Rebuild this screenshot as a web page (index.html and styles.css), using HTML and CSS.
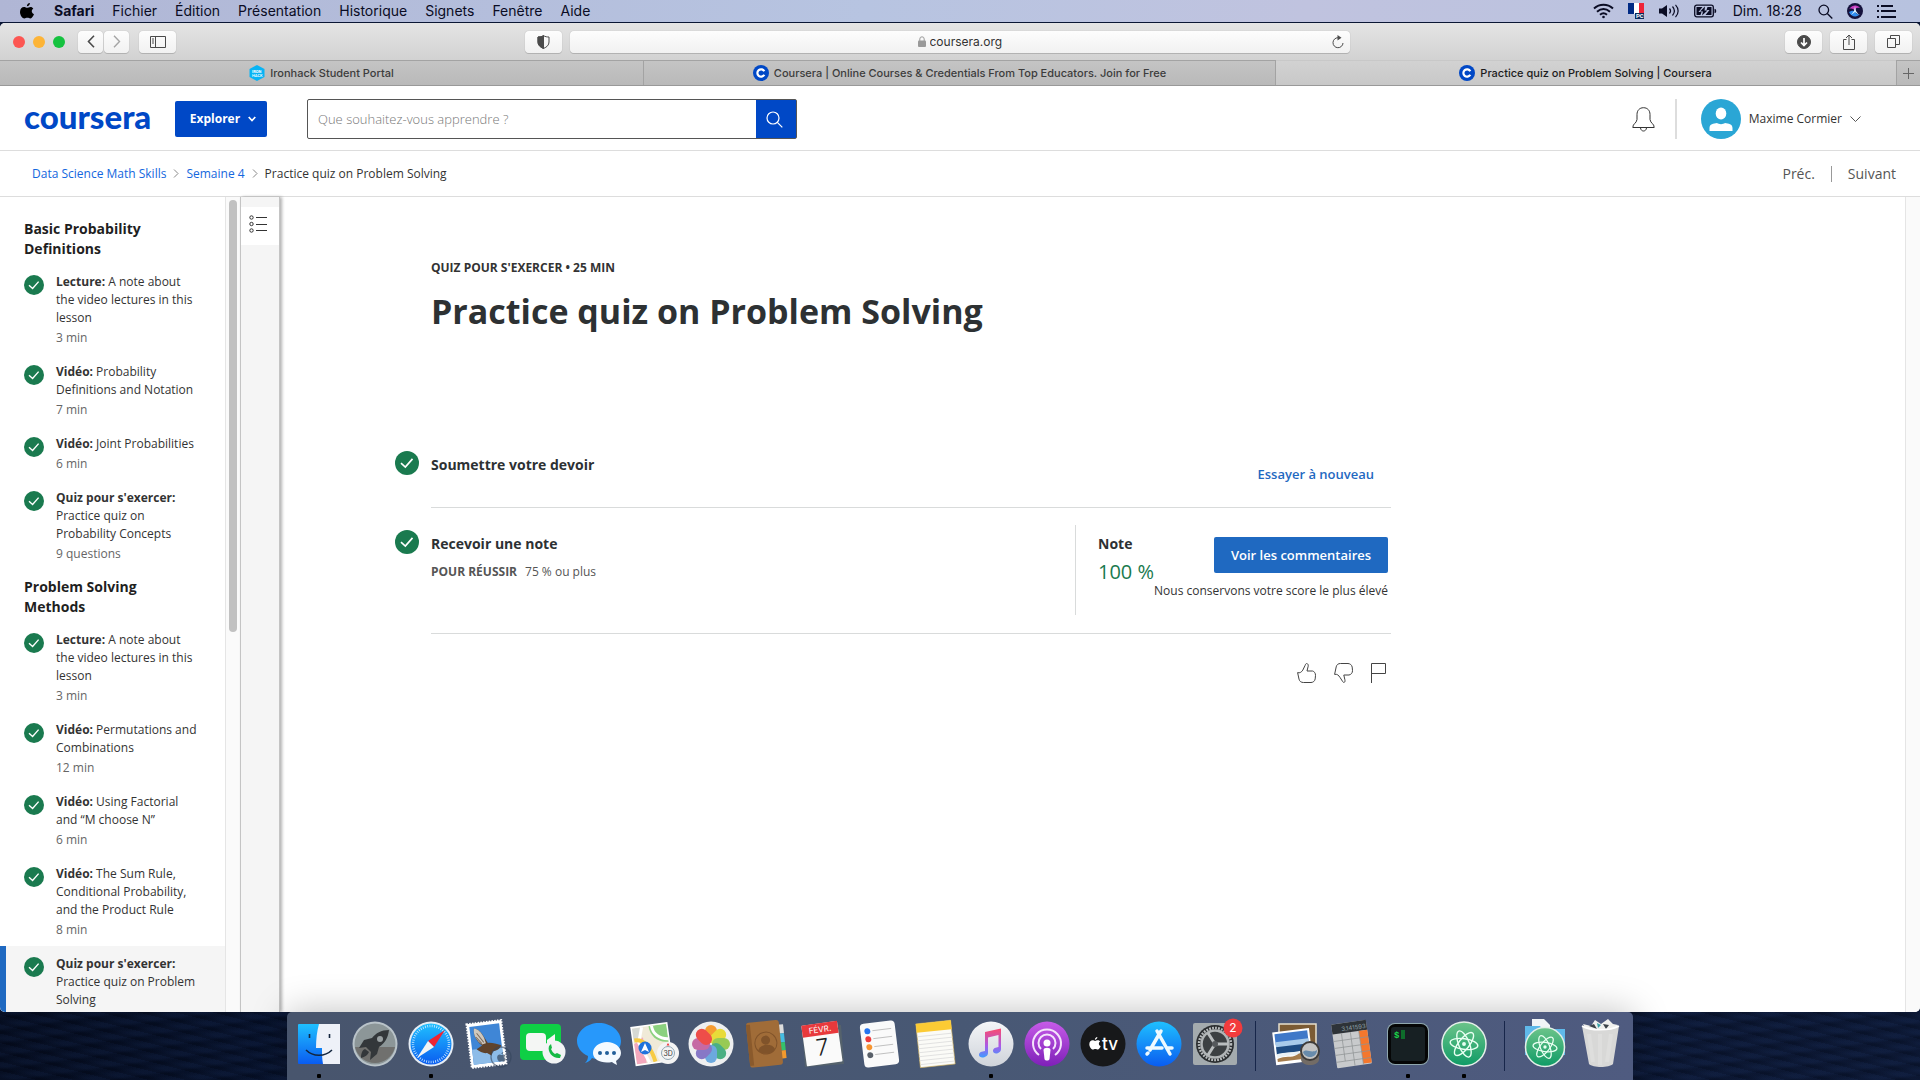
FILE: index.html
```html
<!DOCTYPE html>
<html lang="fr">
<head>
<meta charset="utf-8">
<meta name="viewport" content="width=device-width, initial-scale=1">
<title>Practice quiz on Problem Solving | Coursera</title>
<link rel="stylesheet" href="styles.css">
</head>
<body>
<svg class="defs" aria-hidden="true">
  <symbol id="check" viewBox="0 0 20 20"><circle cx="10" cy="10" r="10" fill="#1a7a4f"/><path d="M5 10.2l3.6 3.2 6-6.8" fill="none" stroke="#fff" stroke-width="1.4"/></symbol>
  <symbol id="fav" viewBox="0 0 16 16"><circle cx="8" cy="8" r="8" fill="#0048c6"/><path d="M11.3 6.2A3.7 3.7 0 1 0 11.3 9.8" fill="none" stroke="#fff" stroke-width="2.2"/></symbol>
  <symbol id="apple" viewBox="0 0 14 16"><path d="M9.9 0c.1 1.600-1.300 3.300-3 3.300C6.700 1.700 8.200.200 9.900 0zM13.300 5.400c-2.300 1.500-1.900 4.700.700 5.700-.6 1.800-2 4.300-3.600 4.300-1.200 0-1.600-.7-3-.7s-1.900.7-3 .7C2.300 15.400 0 11.900 0 8.900 0 5.700 2 4 4 4c1.300 0 2.300.8 3.100.8S9 3.900 10.600 3.900c1 0 2.100.6 2.700 1.500z"/></symbol>
  <symbol id="atom" viewBox="-14 -14 28 28"><g fill="none" stroke="#e9fff2" stroke-width="1.300"><ellipse rx="13" ry="5" transform="rotate(8)"/><ellipse rx="13" ry="5" transform="rotate(68)"/><ellipse rx="13" ry="5" transform="rotate(128)"/></g><circle r="1.800" fill="#e9fff2"/></symbol>
  <linearGradient id="silver" x2="0" y2="1"><stop stop-color="#f4f6f8"/><stop offset="1" stop-color="#cfd3da"/></linearGradient>
  <linearGradient id="green" x2="0" y2="1"><stop stop-color="#6cc48a"/><stop offset="1" stop-color="#0f9b66"/></linearGradient>
  <linearGradient id="blue" x2="0" y2="1"><stop stop-color="#1fc0ff"/><stop offset="1" stop-color="#0a5cf0"/></linearGradient>
</svg>

<header class="menubar">
  <nav class="menus" aria-label="Barre des menus">
    <button aria-label="Pomme"><svg width="16" height="16" viewBox="0 0 16 16"><use href="#apple" width="14" height="16"/></svg></button>
    <button class="app">Safari</button><button>Fichier</button><button>Édition</button><button>Présentation</button><button>Historique</button><button>Signets</button><button>Fenêtre</button><button>Aide</button>
  </nav>
  <div class="status">
    <svg width="21" height="16" viewBox="0 0 21 16" fill="none" stroke="#0a0c24" stroke-width="2"><path d="M1 5.500C6.500.600 14.500.600 20 5.500M4 8.700c4-3.400 9-3.400 13 0M7 11.700c2.200-1.800 4.800-1.800 7 0"/><circle cx="10.500" cy="14" r="1.300" fill="#0a0c24" stroke="none"/></svg>
    <svg width="17" height="16" viewBox="0 0 17 16"><path fill="#002a85" d="M0 0h6v11H0z"/><path fill="#fff" d="M6 0h5v11H6z"/><path fill="#ee2438" d="M11 0h5v11h-5z"/><path fill="#0a2a5c" d="M7 10h9v6H7z"/><text x="8" y="15" font-size="6" font-weight="700" fill="#fff" font-family="Roboto, sans-serif">PC</text></svg>
    <svg width="21" height="14" viewBox="0 0 21 14"><path fill="#0a0c24" d="M0 4.500h3L8 1v12L3 9.500H0z"/><path fill="none" stroke="#0a0c24" stroke-width="1.200" d="M10.500 4.500c1.300 1.500 1.300 3.500 0 5M13.500 2.500c2.300 2.700 2.300 6.300 0 9M16.500.800c3.500 3.700 3.500 8.700 0 12.400"/></svg>
    <svg width="23" height="14" viewBox="0 0 23 14"><rect x=".7" y="1.200" width="18.600" height="11.600" rx="2" fill="none" stroke="#0a0c24" stroke-width="1.300"/><path fill="#0a0c24" d="M2.500 3h6L4.500 8h3l-1 3h-4zM17.500 11h-6l4-5h-3l1-3h4zM11 2.500L6 7.500h3L8 11.500l5.500-5h-3z"/><path fill="#0a0c24" d="M20.500 4.700c2.300.4 2.300 4.200 0 4.600z"/></svg>
    <time>Dim. 18:28</time>
    <svg width="15" height="15" viewBox="0 0 15 15" fill="none" stroke="#0a0c24" stroke-width="1.300"><circle cx="5.800" cy="6" r="4.800"/><path d="M9.300 9.500l5 5"/></svg>
    <svg width="16" height="16" viewBox="0 0 16 16"><circle cx="8" cy="8" r="8" fill="#15123c"/><path d="M2 6c4-5 9-4 11-1-3-1-5 0-5 3-1-2-3-3-6-2z" fill="#c83cc0"/><path d="M2 9c3-2 5-1 6-1 1 3 3 4 5 3-3 4-9 3-11-2z" fill="#2f8cf0"/><path d="M8 3l1 5 3 4-4-3-4 3 3-4z" fill="#dff4ff"/></svg>
    <svg width="19" height="13" viewBox="0 0 19 13" fill="#0a0c24"><path d="M0 0h2v2H0zM0 5h2v2H0zM0 11h2v2H0zM4 0h12v2H4zM4 5h15v2H4zM4 11h15v2H4z"/></svg>
  </div>
</header>

<div class="window">
  <div class="toolbar">
    <div class="tools">
      <span class="lights"><button class="red" aria-label="Fermer"></button><button class="amber" aria-label="Réduire"></button><button class="lime" aria-label="Agrandir"></button></span>
      <span class="pair"><button class="tool" aria-label="Page précédente"><svg width="8" height="13" viewBox="0 0 8 13"><path d="M7 .7L1.500 6.500 7 12.300" stroke-width="1.600"/></svg></button><button class="tool off" aria-label="Page suivante"><svg width="8" height="13" viewBox="0 0 8 13"><path d="M1 .7l5.500 5.800L1 12.300" stroke-width="1.400"/></svg></button></span>
      <button class="tool wide" aria-label="Barre latérale"><svg width="16" height="12" viewBox="0 0 16 12"><path d="M.5.500h15v11H.5zM5.500.500v11M2 3h2M2 5h2M2 7h2"/></svg></button>
      <button class="tool wide shield" aria-label="Rapport de confidentialité"><svg width="13" height="14" viewBox="0 0 13 14"><path d="M6.500.600C5 1.800 2.500 2 1 2v5c0 3 2 5 5.500 6.500C10 12 12 10 12 7V2C10.500 2 8 1.800 6.500.600z"/><path class="solid" d="M6.500.600C5 1.800 2.500 2 1 2v5c0 3 2 5 5.500 6.500z"/></svg></button>
    </div>
    <div class="address">
      <label class="url"><svg width="8" height="11" viewBox="0 0 8 11"><path d="M1.800 5V3a2.200 2.200 0 0 1 4.400 0v2" fill="none" stroke="#999" /><rect y="4.500" width="8" height="6.500" rx="1" fill="#999"/></svg><input type="text" value="coursera.org" aria-label="Adresse"></label>
      <button class="reload" aria-label="Actualiser"><svg width="12" height="14" viewBox="0 0 12 14"><path d="M6 2.700A5 5 0 1 0 11 8"/><path class="solid" d="M5.500 0l4 2.700-4 2.800z" stroke="none"/></svg></button>
    </div>
    <div class="tools end">
      <button class="tool wide" aria-label="Téléchargements"><svg width="14" height="14" viewBox="0 0 14 14"><circle class="solid" cx="7" cy="7" r="6.500"/><path class="light" d="M7 3v7M4 7.500l3 3 3-3" stroke-width="1.700"/></svg></button>
      <button class="tool wide" aria-label="Partager"><svg width="12" height="16" viewBox="0 0 12 16"><path d="M3.500 5.500h-3v10h11v-10h-3M6 11V1M3 4l3-3 3 3"/></svg></button>
      <button class="tool wide" aria-label="Onglets"><svg width="13" height="13" viewBox="0 0 13 13"><path d="M.5 3.500h8v9h-8zM3.500 3V.500h9v9H9"/></svg></button>
    </div>
  </div>
  <div class="tabs">
    <button class="tab"><svg width="16" height="16" viewBox="0 0 16 16"><path fill="#08b4f5" d="M8 0l7.500 4v8L8 16 .5 12V4z"/><text x="3" y="8" font-size="4" font-weight="700" fill="#fff" font-family="Roboto, sans-serif">IRON</text><text x="3" y="12" font-size="4" fill="#fff" font-family="Roboto, sans-serif">HACK</text></svg>Ironhack Student Portal</button>
    <button class="tab"><svg width="16" height="16"><use href="#fav"/></svg>Coursera | Online Courses &amp; Credentials From Top Educators. Join for Free</button>
    <button class="tab current"><svg width="16" height="16"><use href="#fav"/></svg>Practice quiz on Problem Solving | Coursera</button>
    <button class="tab new" aria-label="Nouvel onglet"><svg width="11" height="11" viewBox="0 0 11 11"><path d="M5.500 0v11M0 5.500h11" stroke="#666"/></svg></button>
  </div>

  <div class="site">
    <header class="site-head">
      <a class="logo" href="#">coursera</a>
      <button class="explore">Explorer<svg width="8" height="6" viewBox="0 0 8 6"><path d="M.7 1L4 4.500 7.300 1" fill="none" stroke="#fff" stroke-width="1.700"/></svg></button>
      <form class="search"><input type="text" placeholder="Que souhaitez-vous apprendre ?" aria-label="Rechercher"><button type="button" aria-label="Rechercher"><svg width="17" height="17" viewBox="0 0 17 17" fill="none" stroke="#fff" stroke-width="1.200"><circle cx="7" cy="7" r="6"/><path d="M11.300 11.300l5 5"/></svg></button></form>
      <div class="account">
        <button class="bell" aria-label="Notifications"><svg width="23" height="25" viewBox="0 0 23 25" fill="none" stroke="#333"><path d="M.8 20.500h21.400c0-4-3.700-4-4.200-8V7.500C18 3.500 15.500.700 11.500.700S5 3.500 5 7.500v5c-.5 4-4.200 4-4.200 8zM8.500 21c.5 4 5.500 4 6 0"/></svg></button>
        <button class="user"><svg width="40" height="40" viewBox="0 0 40 40"><circle cx="20" cy="20" r="20" fill="#2aa6d5"/><ellipse cx="20" cy="14.500" rx="5.300" ry="6" fill="#fff"/><path fill="#fff" d="M8.500 32v-3c0-4 4-4.500 7.500-5 2 1.500 6 1.500 8 0 3.500.5 7.500 1 7.500 5v3z"/></svg>Maxime Cormier<svg width="11" height="6" viewBox="0 0 11 6"><path d="M.5.500l5 5 5-5" fill="none" stroke="#555"/></svg></button>
      </div>
    </header>
    <div class="crumbs">
      <nav class="trail" aria-label="Fil d'Ariane"><a href="#">Data Science Math Skills</a><svg width="6" height="9" viewBox="0 0 6 9"><path d="M1 .5l4 4-4 4" fill="none" stroke="#888"/></svg><a href="#">Semaine 4</a><svg width="6" height="9" viewBox="0 0 6 9"><path d="M1 .5l4 4-4 4" fill="none" stroke="#888"/></svg><span>Practice quiz on Problem Solving</span></nav>
      <nav class="pager" aria-label="Pagination"><a href="#">Préc.</a><a href="#">Suivant</a></nav>
    </div>

    <div class="body">
      <nav class="lessons" aria-label="Leçons">
        <h2>Basic Probability Definitions</h2>
        <a class="item" href="#"><svg width="20" height="20"><use href="#check"/></svg><span><b>Lecture:</b> A note about the video lectures in this lesson<small>3 min</small></span></a>
        <a class="item" href="#"><svg width="20" height="20"><use href="#check"/></svg><span><b>Vidéo:</b> Probability Definitions and Notation<small>7 min</small></span></a>
        <a class="item" href="#"><svg width="20" height="20"><use href="#check"/></svg><span><b>Vidéo:</b> Joint Probabilities<small>6 min</small></span></a>
        <a class="item" href="#"><svg width="20" height="20"><use href="#check"/></svg><span><b>Quiz pour s'exercer:</b> Practice quiz on Probability Concepts<small>9 questions</small></span></a>
        <h2>Problem Solving Methods</h2>
        <a class="item" href="#"><svg width="20" height="20"><use href="#check"/></svg><span><b>Lecture:</b> A note about the video lectures in this lesson<small>3 min</small></span></a>
        <a class="item" href="#"><svg width="20" height="20"><use href="#check"/></svg><span><b>Vidéo:</b> Permutations and Combinations<small>12 min</small></span></a>
        <a class="item" href="#"><svg width="20" height="20"><use href="#check"/></svg><span><b>Vidéo:</b> Using Factorial and “M choose N”<small>6 min</small></span></a>
        <a class="item" href="#"><svg width="20" height="20"><use href="#check"/></svg><span><b>Vidéo:</b> The Sum Rule, Conditional Probability, and the Product Rule<small>8 min</small></span></a>
        <a class="item active" href="#"><svg width="20" height="20"><use href="#check"/></svg><span><b>Quiz pour s'exercer:</b> Practice quiz on Problem Solving</span></a>
      </nav>
      <div class="track"><div class="thumb"></div></div>
      <div class="rail"><button aria-label="Afficher la liste"><svg width="18" height="18" viewBox="0 0 18 18" fill="none" stroke="#333"><circle cx="2.500" cy="2.500" r="1.700"/><circle cx="2.500" cy="9" r="1.700"/><circle cx="2.500" cy="15.500" r="1.700"/><path d="M7 2.500h11M7 9.500h11M7 15.500h11"/></svg></button></div>
      <main class="main">
        <div class="quiz">
          <div class="intro"><p class="kind">QUIZ POUR S'EXERCER • 25 MIN</p><h1>Practice quiz on Problem Solving</h1></div>
          <section class="step submit">
            <svg width="24" height="24"><use href="#check"/></svg>
            <div class="panel"><h3>Soumettre votre devoir</h3><button class="retry">Essayer à nouveau</button></div>
          </section>
          <section class="step grade">
            <svg width="24" height="24"><use href="#check"/></svg>
            <div class="panel">
              <div class="goal"><h3>Recevoir une note</h3><p><b>POUR RÉUSSIR</b>75 % ou plus</p></div>
              <div class="result">
                <div class="score"><h3>Note</h3><strong>100 %</strong></div>
                <div class="review"><button>Voir les commentaires</button><p>Nous conservons votre score le plus élevé</p></div>
              </div>
            </div>
          </section>
          <div class="feedback">
            <button aria-label="J'aime"><svg width="19" height="20" viewBox="0 0 19 20"><path d="M.6 9.600c2.200.7 4-.5 5.200-2.500L8 2.600C8.600 1 9 .500 9.700.500c1.300.3 1.700 1.300 1.500 2.700L10 8h5.500c1.800.5 3 2 3 4.300l-.3 3.600c-.5 2.300-2 3.500-4.200 3.600H6.500c-2.300 0-4-1.100-4.500-3.400z"/></svg></button>
            <button aria-label="Je n'aime pas"><svg width="19" height="20" viewBox="0 0 19 20"><path d="M.6 11.400c2.700-.5 4 .8 5.600 3.300l2.300 3.600c.6 1 1 1.200 1.600 1.200 1-.5 1-1.500.8-2.700L9.800 12H15c2-.4 3.500-2 3.500-4.300l-.3-3.600C17.700 1.800 16 .600 14 .500H6.500C4.200.500 2.700 1.600 2.200 3.900z"/></svg></button>
            <button aria-label="Signaler un problème"><svg width="15" height="20" viewBox="0 0 15 20"><path d="M.5 20V.500h14v10H.500"/></svg></button>
          </div>
        </div>
      </main>
      <div class="gutter"></div>
    </div>
  </div>
</div>

<footer class="desktop">
  <nav class="dock" aria-label="Dock">
    <button class="running" aria-label="Finder"><svg viewBox="0 0 56 60"><rect x="7" y="12" width="42" height="40" rx="1" fill="url(#blue)"/><path d="M28 12h21v40H32c-1-5-1-10-1-16h-6c0-9 1-17 3-24z" fill="#eef1f8"/><path d="M18.500 22v4M38.500 22v4" stroke="#13263f" stroke-width="1.600"/><path d="M15 38c7 7 19 7 26 0" fill="none" stroke="#13263f" stroke-width="1.500"/></svg></button>
    <button aria-label="Launchpad"><svg viewBox="0 0 56 60"><circle cx="28" cy="32" r="22.500" fill="#b9c3c9"/><circle cx="28" cy="32" r="20.500" fill="#8c9698"/><path d="M8 35a20.500 20.500 0 0 0 40 0z" fill="#70706e"/><path d="M42 18c-8 0-13 3-17 8l-8 2-5 8 7-1 5 5-1 8 7-6 2-7c6-4 9-9 10-17zM18 37c-3 1-4 5-4 9 4-1 7-3 8-6z" fill="#33373a"/><circle cx="33" cy="27" r="3" fill="#9aa1a3"/></svg></button>
    <button class="running" aria-label="Safari"><svg viewBox="0 0 56 60"><circle cx="28" cy="32" r="22.500" fill="#e6edf4"/><circle cx="28" cy="32" r="20.500" fill="url(#blue)"/><circle cx="28" cy="32" r="18" fill="none" stroke="#cdeaff" stroke-width="2.500" stroke-dasharray=".8 1.500"/><path d="M42 18L25 29l6 6z" fill="#ee2434"/><path d="M14 46l11-17 6 6z" fill="#f4f4f4"/></svg></button>
    <button aria-label="Mail"><svg viewBox="0 0 56 60"><g transform="rotate(-7 28 32)"><rect x="10" y="10" width="35" height="44" fill="#fff" stroke="#fff" stroke-width="2" stroke-dasharray="1.500 1.300"/><rect x="12.500" y="13" width="30" height="38" fill="#3f86d6"/><path d="M12.500 36h30v15h-30z" fill="#8dbce8"/><path d="M17 15c4 1 7 5 9 10l3 6c4 0 8 2 13 4-2 4-6 5-9 5l-2 4-4-3c-4 0-7-2-10-5l6-3c-5-5-8-12-6-18z" fill="#5f432c"/><path d="M17 15c4 1 7 5 9 11l1 5-4 1c-5-5-8-11-6-17z" fill="#cfc8bd"/><path d="M19 20l6 10M18 24l5 7" stroke="#7d6c5c"/></g><circle cx="42" cy="45" r="10" fill="none" stroke="#34455c" stroke-width="1.300" opacity=".6"/><use href="#apple" x="38" y="40" width="9" height="10" fill="#34455c" opacity=".7"/></svg></button>
    <button aria-label="FaceTime"><svg viewBox="0 0 56 60"><rect x="5" y="12" width="41" height="36" rx="4" fill="#0fcf45"/><rect x="11" y="21" width="20" height="18" rx="4" fill="#f4f6f4"/><path d="M32 28l8-6v14l-8-4z" fill="#f4f6f4"/><circle cx="39" cy="40" r="11.500" fill="#f2f4f5"/><path d="M34 34c-2 6 4 13 11 12l1-3-4-2-2 1c-2-1-3-3-4-5l1-1-1-4z" fill="#16ba45"/></svg></button>
    <button aria-label="Messages"><svg viewBox="0 0 56 60"><path d="M28 11c12 0 22 8 22 18S40 47 28 47c-3 0-5 0-7-1-2 3-4 4-7 5 2-2 3-4 3-7-7-3-11-9-11-15C6 19 16 11 28 11z" fill="#2798fb"/><path d="M36 30c8 0 14 5 14 11 0 3-2 6-5 8l1 4c-2-1-4-2-5-3-10 2-19-2-19-9 0-6 6-11 14-11z" fill="#f4faff"/><g fill="#225f9a"><circle cx="29" cy="41" r="2"/><circle cx="36" cy="41" r="2"/><circle cx="43" cy="41" r="2"/></g></svg></button>
    <button aria-label="Plans"><svg viewBox="0 0 56 60"><g transform="rotate(-8 25 32)"><rect x="6.500" y="13" width="36" height="38" fill="#f0ead8"/><path d="M24 14h18v18c-11 0-18-8-18-18z" fill="#8bd17f"/><path d="M7 14h11l-6 12H7z" fill="#d6d9d4"/><path d="M7 30l10-6v26H7z" fill="#f3a8bd"/><path d="M27 14c0 8 6 14 15 15M17 14l-5 15 8 21" fill="none" stroke="#fff" stroke-width="3"/><path d="M8 26c12 0 16 12 18 24" fill="none" stroke="#f7cb44" stroke-width="4"/><rect x="6.500" y="13" width="36" height="38" fill="none" stroke="#fff" stroke-width="1.500"/></g><circle cx="18" cy="36" r="6.500" fill="#1f73dc"/><path d="M18 31l4 9-4-2-4 2z" fill="#fff"/><circle cx="41" cy="41" r="11" fill="#f4f4f4"/><circle cx="41" cy="41" r="6.500" fill="none" stroke="#91a7b5"/><text x="36.500" y="44" font-size="7" font-family="Inter, sans-serif" fill="#333">3D</text><path d="M41 31l1.500 2.500h-3z" fill="#e33"/></svg></button>
    <button aria-label="Photos"><svg viewBox="0 0 56 60"><circle cx="28" cy="32" r="22.500" fill="#eeeff0"/><g transform="translate(28 32)" opacity=".9"><rect x="-6" y="-19" width="12" height="18" rx="6" fill="#f7941e"/><rect x="-6" y="-19" width="12" height="18" rx="6" fill="#e8d926" transform="rotate(45)"/><rect x="-6" y="-19" width="12" height="18" rx="6" fill="#8fc744" transform="rotate(90)"/><rect x="-6" y="-19" width="12" height="18" rx="6" fill="#3aa979" transform="rotate(135)"/><rect x="-6" y="-19" width="12" height="18" rx="6" fill="#5ea2dd" transform="rotate(180)"/><rect x="-6" y="-19" width="12" height="18" rx="6" fill="#7c6cc2" transform="rotate(225)"/><rect x="-6" y="-19" width="12" height="18" rx="6" fill="#c25b9c" transform="rotate(270)"/><rect x="-6" y="-19" width="12" height="18" rx="6" fill="#ee3c38" transform="rotate(315)"/></g></svg></button>
    <button aria-label="Contacts"><svg viewBox="0 0 56 60"><g transform="rotate(-6 28 32)"><path fill="#ddd" d="M40 14h6v9h-6z"/><path fill="#45bde3" d="M40 23h6v9h-6z"/><path fill="#35c26b" d="M40 32h6v8h-6z"/><path fill="#f39a2e" d="M40 40h6v8h-6z"/><rect x="9" y="9" width="33" height="45" rx="3" fill="#a06c38"/><path fill="#8a5a2c" d="M9 11h4v41H9z"/><circle cx="27" cy="31" r="11" fill="none" stroke="#80532a"/><circle cx="27" cy="28" r="4.500" fill="#80532a"/><path d="M18.500 38c2-7 15-7 17 0-4 5-13 5-17 0z" fill="#80532a"/></g></svg></button>
    <button aria-label="Calendrier"><svg viewBox="0 0 56 60"><path d="M7 16l39-3 3 39-39 3z" fill="#55626c"/><g transform="rotate(-8 28 32)"><rect x="9" y="11" width="36" height="41" rx="1" fill="#fafafa"/><path d="M9 11h36v12H9z" fill="#e8393c"/><text x="27" y="20" text-anchor="middle" font-size="8" fill="#fff" font-family="Inter, sans-serif">FÉVR.</text><text x="27" y="43" text-anchor="middle" font-size="23" fill="#222" font-family="Inter, sans-serif" font-weight="300">7</text></g></svg></button>
    <button aria-label="Rappels"><svg viewBox="0 0 56 60"><g transform="rotate(-7 28 32)"><rect x="11" y="10" width="35" height="44" rx="4" fill="#fafafa"/><circle cx="18" cy="18" r="3" fill="#2474f0"/><circle cx="18" cy="26" r="3" fill="#ee3b3b"/><circle cx="18" cy="34" r="3" fill="#f79530"/><circle cx="18" cy="42" r="3" fill="#596069"/><path d="M23 18h19M23 26h19M23 34h19M23 42h19" stroke="#b5b5b5" stroke-width=".8"/></g></svg></button>
    <button aria-label="Notes"><svg viewBox="0 0 56 60"><g transform="rotate(-6 28 32)"><rect x="11" y="10" width="35" height="44" fill="#fbfbf7" stroke="#caa850" stroke-width=".6"/><path d="M11 10h35v9H11z" fill="#fccb34"/><path d="M11 23h35M11 27h35M11 31h35M11 35h35M11 39h35M11 43h35M11 47h35M11 51h35" stroke="#dcdcdc" stroke-width=".8"/></g></svg></button>
    <button class="running" aria-label="Musique"><svg viewBox="0 0 56 60"><linearGradient id="note" x2="0" y2="1"><stop stop-color="#fb4a6d"/><stop offset=".6" stop-color="#a95ae8"/><stop offset="1" stop-color="#3f9bff"/></linearGradient><circle cx="28" cy="32" r="22.500" fill="url(#silver)"/><path d="M22 20l16-3.500V37c0 5-8 6-8 2 0-3 3-3.500 5.500-4V23L25 25.500V41c0 5-9 6-9 2 0-3 3-3.500 6-4z" fill="url(#note)"/></svg></button>
    <button aria-label="Podcasts"><svg viewBox="0 0 56 60"><linearGradient id="pod" x2="0" y2="1"><stop stop-color="#c65be8"/><stop offset="1" stop-color="#7e20b8"/></linearGradient><circle cx="28" cy="32" r="22.500" fill="url(#pod)"/><g fill="none" stroke="#f4e4fb" stroke-width="2"><path d="M20 43a14 14 0 1 1 16 0"/><path d="M22 37a8.500 8.500 0 1 1 12 0"/></g><circle cx="28" cy="31" r="3.500" fill="#fff"/><path d="M24.500 38c0-3 7-3 7 0l-1 9c-.5 2-4.500 2-5 0z" fill="#fff"/></svg></button>
    <button aria-label="TV"><svg viewBox="0 0 56 60"><circle cx="28" cy="32" r="22.500" fill="#17181a"/><use href="#apple" x="14" y="25" width="12" height="13" fill="#fff"/><text x="27" y="38" font-size="17" font-weight="500" fill="#fff" font-family="Inter, sans-serif">tv</text></svg></button>
    <button aria-label="App Store"><svg viewBox="0 0 56 60"><circle cx="28" cy="32" r="22.500" fill="url(#blue)"/><g stroke="#eefaff" stroke-width="3.500" stroke-linecap="round"><path d="M26 19l13 23M30 19L19 38M16 36h15M36 36h5M17 41l-1 1"/></g></svg></button>
    <button aria-label="Préférences Système"><svg viewBox="0 0 56 60"><rect x="6" y="11" width="44" height="42" rx="2" fill="#a4abae"/><circle cx="28" cy="32" r="19" fill="#2b2e30"/><circle cx="28" cy="32" r="16" fill="none" stroke="#b9bdbe" stroke-width="2.500" stroke-dasharray="1.800 1.200"/><circle cx="28" cy="32" r="13.500" fill="#3c4042" stroke="#b0b4b5" stroke-width="2.500"/><path d="M28 32h13M28 32l-7-11M28 32l-7 11" stroke="#b9bdbe" stroke-width="3"/><circle cx="28" cy="32" r="3" fill="#55595c"/><circle cx="46" cy="16" r="9.500" fill="#f23b3d"/><text x="46" y="20" text-anchor="middle" font-size="12" fill="#fff" font-family="Inter, sans-serif">2</text></svg></button>
    <i class="sep"></i>
    <button aria-label="Aperçu"><svg viewBox="0 0 56 60"><rect x="11" y="12" width="37" height="32" fill="#7b5b34" stroke="#e8e0cc" stroke-width="1.500"/><g transform="rotate(-7 26 34)"><rect x="6" y="18" width="37" height="33" fill="#fff"/><path fill="#3f78c8" d="M8 20h33v11H8z"/><path fill="#a9cbea" d="M8 28h33v6H8z"/><path fill="#1f4c82" d="M8 33h33v6c-11 3-22-1-33 2z"/><path fill="#e9f1f6" d="M8 40c8-2 16 2 33-2v3c-12 5-20 0-33 3z"/><path fill="#a57c4c" d="M8 45c8-3 14 1 20-2 4-2 8 0 13-1v6H8z"/></g><path d="M33 39h18v8c0 8-18 8-18 0z" fill="#736c66"/><circle cx="42" cy="39" r="9" fill="#c4c4c4" stroke="#3f3c3a" stroke-width="2"/><path d="M35 40c4-4 8 2 14-2 0 9-12 9-14 2z" fill="#688bab"/></svg></button>
    <button aria-label="Calculette"><svg viewBox="0 0 56 60"><g transform="rotate(-8 28 32)"><rect x="10" y="10" width="35" height="44" rx="1" fill="#c8cacc"/><path d="M10 10h35v10H10z" fill="#2e3338"/><text x="44" y="18" text-anchor="end" font-size="6" fill="#8fa1a8" font-family="Inter, sans-serif">3.141593</text><path fill="#f4772d" d="M36.500 20H45v33h-8.500z"/><path d="M10 27h35M10 34h35M10 41h35M10 48h35M19 20v28M28 20v34M36.500 20v34" stroke="#8f9294" stroke-width=".7"/></g></svg></button>
    <button class="running" aria-label="Terminal"><svg viewBox="0 0 56 60"><rect x="7" y="11" width="42" height="42" rx="8" fill="#8fa7ae"/><rect x="8" y="12" width="40" height="40" rx="7" fill="#050606"/><rect x="11" y="15" width="34" height="34" rx="3" fill="#172023"/><text x="14" y="26" font-size="9" font-weight="700" fill="#1bd64a" font-family="Liberation Mono, monospace">$</text><path fill="#0e6d2b" d="M21 18h4v9h-4z"/></svg></button>
    <button class="running" aria-label="Atom"><svg viewBox="0 0 56 60"><circle cx="28" cy="32" r="22" fill="url(#green)" stroke="#e4efe8" stroke-width="1.500"/><use href="#atom" x="13" y="17" width="30" height="30"/></svg></button>
    <i class="sep"></i>
    <button aria-label="Dossier Atom"><svg viewBox="0 0 56 60"><path d="M15 7h12l6 6v14H15z" fill="#f1f4f6"/><path d="M8 14h15l2 3h23v26H8z" fill="#5fb9ea"/><circle cx="28" cy="35" r="19.500" fill="url(#green)" stroke="#e4efe8" stroke-width="1.500"/><use href="#atom" x="15" y="22" width="26" height="26"/></svg></button>
    <button aria-label="Corbeille"><svg viewBox="0 0 56 60"><path d="M10 12l8 2 4-6 6 4 7-5 5 5 5 1-3 5H13z" fill="#f0f0ee"/><path d="M16 14l5-2 3 5zM30 12l6 1-3 4z" fill="#3c434a"/><path d="M24 11l4 2-3 3z" fill="#38a2a8"/><path d="M9 14c8 5 28 5 37 0l-6 38c-4 4-20 4-24 0z" fill="#d8d8d7"/><path d="M16 22l4 28M27 22v31M38 22l-4 28" stroke="#dededd" stroke-width="4" fill="none"/><path d="M9 14c8 5 28 5 37 0" fill="none" stroke="#fff" stroke-width="1.500"/></svg></button>
  </nav>
</footer>
</body>
</html>
```

FILE: styles.css
```css
* { box-sizing: border-box; }
body {
  margin: 0;
  height: 100vh;
  display: flex;
  flex-direction: column;
  overflow: hidden;
  background: #0a1634;
  color: #333;
  font-family: "Open Sans", "Noto Sans", sans-serif;
  font-size: 12px;
  line-height: 18px;
}
button, input { font: inherit; color: inherit; border: 0; padding: 0; margin: 0; background: none; outline: 0; }
button { display: inline-flex; align-items: center; justify-content: center; white-space: nowrap; }
a { color: inherit; text-decoration: none; }
h1, h2, h3, p { margin: 0; }
svg { flex: none; display: block; }
.defs { position: absolute; width: 0; height: 0; }

/* System menu bar */
.menubar {
  flex: none;
  height: 22px;
  display: flex;
  justify-content: space-between;
  padding: 0 24px 0 20px;
  background: linear-gradient(90deg, #b0b6d5, #b7c4e1 45%, #c0c3df 68%, #b7c2df);
  color: #0a0c24;
  font: 14px/22px Inter, sans-serif;
}
.menus { display: flex; gap: 18px; }
.app { font-weight: 700; }
.status { display: flex; align-items: center; gap: 14px; }
.status time { margin: 0 2px; }

/* Browser window */
.window {
  flex: 1;
  min-height: 0;
  margin-top: 1px;
  display: flex;
  flex-direction: column;
  overflow: hidden;
  border-radius: 5px;
  background: #fff;
}
.toolbar {
  flex: none;
  height: 37px;
  display: grid;
  grid-template-columns: 1fr minmax(0, 780px) 1fr;
  align-items: center;
  gap: 8px;
  padding: 0 8px;
  background: linear-gradient(#e4e4e4, #d2d2d2);
}
.tools { display: flex; align-items: center; gap: 10px; padding-left: 5px; }
.tools.end { justify-content: flex-end; gap: 8px; padding: 0; }
.lights { display: flex; gap: 8px; margin-right: 3px; }
.lights button { width: 12px; height: 12px; border-radius: 50%; }
.red { background: #fc5652; }
.amber { background: #fdb436; }
.lime { background: #15c23f; }
.pair { display: flex; gap: 1px; }
.tool {
  width: 25px;
  height: 22px;
  border-radius: 4px;
  background: linear-gradient(#fdfdfd, #f1f1f1);
  box-shadow: 0 0 1px #999, 0 1px 0 #b5b5b5;
}
.tool svg, .reload svg { fill: none; stroke: #4a4a4a; }
.tool.off svg { stroke: #a5a5a5; }
.tool.wide { width: 37px; }
.tool .solid, .reload .solid { fill: #4a4a4a; }
.tool .light { stroke: #fff; }
.tool.shield { margin-left: auto; }
.address {
  height: 22px;
  display: grid;
  grid-template-columns: 24px 1fr 24px;
  border-radius: 4px;
  background: linear-gradient(#fdfdfd, #f1f1f1);
  box-shadow: 0 0 1px #999, 0 1px 0 #b5b5b5;
}
.url { grid-column: 2; display: flex; align-items: center; justify-content: center; gap: 4px; font: 12px/22px Inter, sans-serif; }
.url input { width: 73px; }
.tabs {
  flex: none;
  height: 26px;
  display: grid;
  grid-template-columns: 644fr 632fr 620fr 24px;
  border-bottom: 1px solid #999;
}
.tab {
  min-width: 0;
  overflow: hidden;
  gap: 5px;
  border: 0 solid #a3a3a3;
  border-width: 1px 1px 0 0;
  background: linear-gradient(#c4c4c4, #b9b9b9);
  color: #3c3c3c;
  font: 500 11px/16px Inter, sans-serif;
}
.tab.current { border-color: transparent; background: linear-gradient(#d2d2d2, #c8c8c8); color: #1c1c1c; }
.tab.new { border-width: 1px 0 0 1px; }

/* Site header */
.site { flex: 1; min-height: 0; display: flex; flex-direction: column; }
.site-head {
  flex: none;
  height: 65px;
  display: flex;
  align-items: center;
  padding: 2px 59px 0 24px;
  border-bottom: 1px solid #ddd;
}
.logo { width: 151px; color: #0048c6; font: 900 33px/40px Lato, sans-serif; padding-bottom: 6px; }
.explore { width: 92px; height: 36px; gap: 8px; padding-left: 4px; border-radius: 2px; background: #0048c6; color: #fff; font-weight: 700; }
.search { display: flex; width: 490px; height: 40px; margin-left: 40px; border: 1px solid #555; border-radius: 2px; }
.search input { flex: 1; min-width: 0; padding: 0 10px; font-size: 13px; font-weight: 300; }
.search input::placeholder { color: #777; opacity: 1; }
.search button { width: 40px; padding-right: 3px; background: #0048c6; }
.account { margin-left: auto; display: flex; align-items: center; gap: 20px; }
.user { height: 40px; gap: 8px; padding-left: 24px; border-left: 2px solid #ddd; }

.crumbs {
  flex: none;
  height: 46px;
  display: flex;
  align-items: center;
  justify-content: space-between;
  padding: 0 24px 0 32px;
  border-bottom: 1px solid #ddd;
}
.trail { display: flex; align-items: center; gap: 7px; }
.trail a { color: #1467de; }
.pager { display: flex; align-items: center; font-size: 14px; color: #555; line-height: 16px; }
.pager a + a { margin-left: 16px; padding-left: 16px; border-left: 1px solid #999; }

/* Lesson list */
.body { flex: 1; min-height: 0; display: flex; }
.lessons { width: 225px; flex: none; overflow: hidden; padding-top: 15px; }
.lessons h2 { padding: 7px 60px 5px 24px; color: #1f1f1f; font-size: 14px; line-height: 20px; }
.item { display: flex; gap: 12px; padding: 9px 24px 7px; }
.item svg { margin-top: 2px; }
.item small { display: block; margin-top: 2px; color: #666; font-size: 12px; }
.item.active { padding-left: 18px; border-left: 6px solid #1f69c1; background: #f5f5f5; }
.track { width: 15px; flex: none; padding: 3px; border-left: 1px solid #e5e5e5; background: #fafafa; }
.thumb { width: 8px; height: 53.4%; border-radius: 4px; background: #c1c1c1; }
.rail { width: 40px; flex: none; z-index: 1; padding-top: 10px; background: #f5f5f5; border: 0 solid #c4c4c4; border-width: 0 1px; box-shadow: 2px 0 3px rgba(0, 0, 0, .3); }
.rail button { width: 38px; height: 38px; padding: 0 4px 4px 0; background: #fff; }

/* Quiz */
.main { flex: 1; min-width: 0; padding: 62px 24px 0 115px; }
.quiz { max-width: 996px; }
.intro { padding-left: 36px; }
.kind { font-weight: 700; color: #333; }
h1 { margin-top: 10px; color: #2d3133; font-size: 34px; line-height: 48px; }
h3 { color: #2d3133; font-size: 14px; line-height: 20px; }
.step { display: flex; }
.step > svg { margin: 8px 12px 0 0; }
.panel { flex: 1; display: flex; border-bottom: 1px solid #d9dbdb; }
.submit { margin-top: 108px; }
.submit .panel { height: 65px; align-items: center; justify-content: space-between; padding: 0 17px 2px 0; }
.submit h3 { align-self: flex-start; padding-top: 12px; }
.retry { color: #1f69c1; font-size: 13px; font-weight: 600; }
.grade > svg { margin-top: 22px; }
.grade .panel { padding: 17px 0 18px; justify-content: space-between; }
.goal { padding-top: 9px; }
.goal p { margin-top: 9px; color: #555; }
.goal b { margin-right: 8px; }
.result { width: 316px; height: 90px; display: flex; justify-content: space-between; padding: 0 3px 0 22px; border-left: 1px solid #d9dbdb; }
.score { padding-top: 9px; white-space: nowrap; }
.score strong { display: block; margin-top: 4px; color: #1a7a4f; font-size: 20px; line-height: 28px; font-weight: 400; }
.review { padding-top: 12px; display: flex; flex-direction: column; align-items: flex-end; gap: 9px; }
.review button { width: 174px; height: 36px; border-radius: 2px; background: #1f69c1; color: #fff; font-size: 13px; font-weight: 600; }
.review p { white-space: nowrap; }
.feedback { display: flex; justify-content: flex-end; gap: 18px; padding: 29px 5px 0 0; }
.feedback svg { fill: none; stroke: #444; }
.gutter { width: 15px; flex: none; background: #fafafa; border-left: 1px solid #e5e5e5; }

/* Dock */
.desktop {
  flex: none;
  height: 68px;
  display: flex;
  justify-content: center;
  background:
    repeating-linear-gradient(172deg, rgba(60, 90, 150, .06) 0 3px, rgba(0, 0, 0, .1) 6px 8px, rgba(60, 90, 150, .06) 13px),
    repeating-linear-gradient(14deg, rgba(0, 0, 0, .08) 0 2px, rgba(60, 90, 150, .05) 5px 9px),
    linear-gradient(90deg, #040c20, #06112b 15%, #0b1734);
}
.dock {
  z-index: 2;
  display: flex;
  padding: 0 4px;
  border-radius: 5px 5px 0 0;
  background: linear-gradient(90deg, #48556d, #485874 50%, #4f5b80);
  box-shadow: 0 0 36px rgba(0, 0, 0, .25);
}
.dock button { width: 56px; height: 68px; flex-direction: column; justify-content: flex-start; }
.dock button svg { width: 56px; height: 60px; }
.running::after { content: ""; width: 4px; height: 4px; margin-top: 2px; border-radius: 1px; background: #000; }
.sep { width: 1px; height: 50px; margin: 9px 12px; background: #17264a; }
```
